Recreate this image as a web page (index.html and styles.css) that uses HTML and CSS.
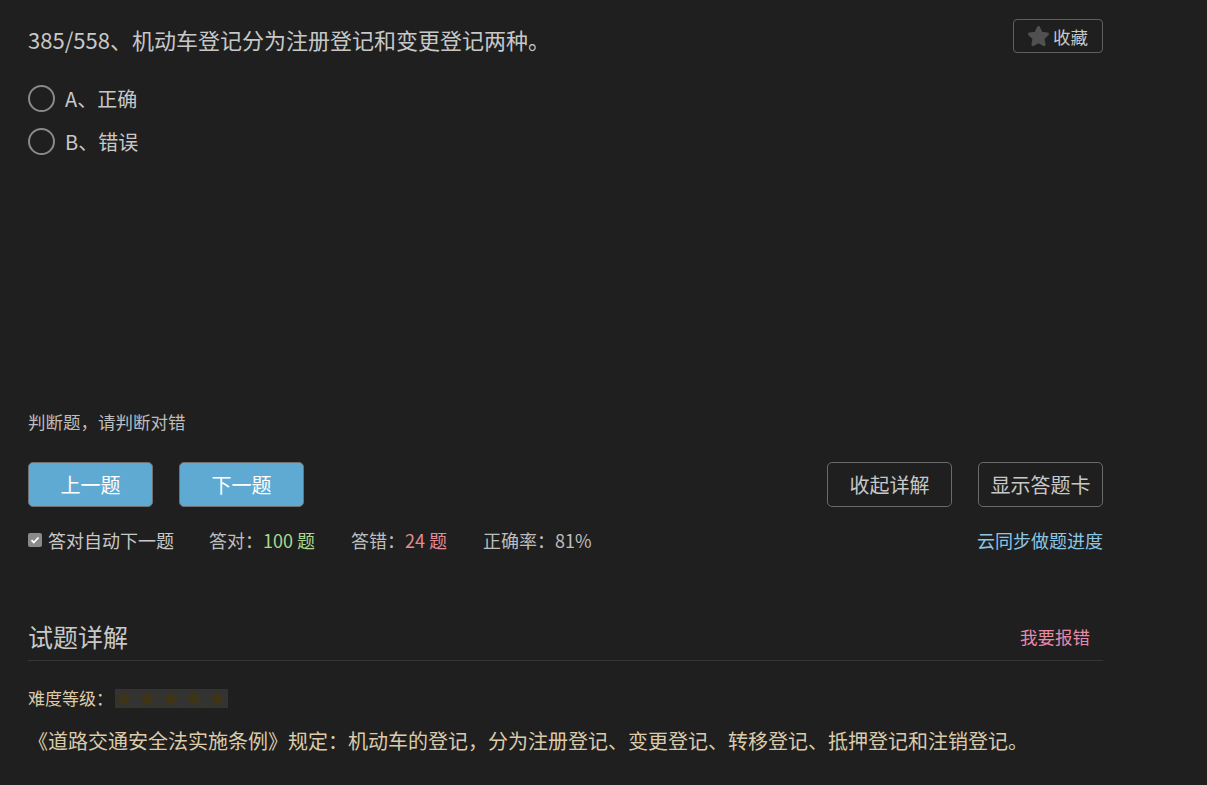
FILE: index.html
```html
<!DOCTYPE html>
<html lang="zh">
<head>
<meta charset="utf-8">
<link rel="stylesheet" href="styles.css">
</head>
<body>
<div class="page">
  <div class="q-head">
    <div class="q-title">385/558、机动车登记分为注册登记和变更登记两种。</div>
    <button class="fav"><svg width="23" height="23" viewBox="0 0 24 24"><path d="M12 2.5l2.9 6 6.6.9-4.8 4.6 1.2 6.6L12 17.4l-5.9 3.2 1.2-6.6-4.8-4.6 6.6-.9z" fill="#505050" stroke="#505050" stroke-width="3" stroke-linejoin="round"/></svg><span>收藏</span></button>
  </div>
  <div class="options">
    <label class="opt"><span class="radio"></span><span>A、正确</span></label>
    <label class="opt"><span class="radio"></span><span>B、错误</span></label>
  </div>
  <div class="hint">判断题，请判断对错</div>
  <div class="btn-row">
    <div class="btn-group">
      <button class="btn primary">上一题</button>
      <button class="btn primary">下一题</button>
    </div>
    <div class="btn-group">
      <button class="btn">收起详解</button>
      <button class="btn">显示答题卡</button>
    </div>
  </div>
  <div class="stats">
    <div class="stats-left">
      <label class="auto"><span class="check"><svg width="10" height="10" viewBox="0 0 10 10"><path d="M1.5 5.2l2.3 2.3 4.7-5" fill="none" stroke="#fff" stroke-width="1.8"/></svg></span>答对自动下一题</label>
      <span class="stat">答对：<em class="ok">100 题</em></span>
      <span class="stat">答错：<em class="bad">24 题</em></span>
      <span class="stat">正确率：81%</span>
    </div>
    <a class="sync">云同步做题进度</a>
  </div>
  <div class="detail-head">
    <div class="detail-title">试题详解</div>
    <a class="report">我要报错</a>
  </div>
  <div class="level">难度等级：<svg class="stars" width="113" height="19" viewBox="0 0 113 19">
      <defs><path id="st" d="M0,-8.5 L2.1,-2.8 L8.1,-2.6 L3.3,1.1 L5,6.9 L0,3.5 L-5,6.9 L-3.3,1.1 L-8.1,-2.6 L-2.1,-2.8Z" fill="#3e3516" stroke="#3e3516" stroke-width="0.8" stroke-linejoin="round"/></defs>
      <rect width="113" height="19" fill="#333"/>
      <use href="#st" transform="translate(9,10)"/>
      <use href="#st" transform="translate(32.3,10)"/>
      <use href="#st" transform="translate(55.7,10)"/>
      <use href="#st" transform="translate(79,10)"/>
      <use href="#st" transform="translate(102.3,10)"/>
    </svg></div>
  <div class="explain">《道路交通安全法实施条例》规定：机动车的登记，分为注册登记、变更登记、转移登记、抵押登记和注销登记。</div>
</div>
</body>
</html>
```
FILE: styles.css
```css
html, body { margin: 0; padding: 0; background: #1f1f1f; }
body { font-family: "Noto Sans CJK SC", "Liberation Sans", sans-serif; color: #c8c8c8; }
.page { width: 1075px; margin-left: 28px; padding-top: 19px; }
.q-head { display: flex; justify-content: space-between; align-items: flex-start; height: 66px; }
.q-title { font-size: 22px; line-height: 28px; color: #c8c8c8; margin-top: 6px; }
.fav { display: flex; align-items: center; gap: 3px; height: 34px; width: 90px; padding: 0 0 0 13px; background: transparent; border: 1px solid #606060; border-radius: 4px; color: #c8c8c8; font-family: inherit; font-size: 17.5px; }
.options { display: flex; flex-direction: column; gap: 16px; }
.opt { display: flex; align-items: center; gap: 10px; font-size: 20px; line-height: 26px; color: #c8c8c8; }
.radio { width: 23px; height: 23px; border: 2px solid #8a8a8a; border-radius: 50%; }
.hint { margin-top: 256px; font-size: 17.5px; line-height: 22px; color: #bdbdbd; }
.btn-row { display: flex; justify-content: space-between; margin-top: 29px; }
.btn-group { display: flex; gap: 26px; }
.btn { width: 125px; height: 45px; border: 1px solid #6a6a6a; border-radius: 5px; background: transparent; color: #c8c8c8; font-family: inherit; font-size: 20px; padding: 0; }
.btn.primary { background: #5faad3; color: #fff; border-color: #707070; }
.stats { display: flex; justify-content: space-between; align-items: center; margin-top: 21px; font-size: 18px; line-height: 24px; }
.stats-left { display: flex; align-items: center; }
.auto { display: flex; align-items: center; gap: 6px; margin-right: 35px; color: #c8c8c8; }
.check { width: 14px; height: 14px; background: #8a8a8a; border-radius: 2px; display: flex; align-items: center; justify-content: center; }
.stat { margin-right: 36px; color: #bdbdbd; }
.stat em { font-style: normal; }
.ok { color: #a9d88d; }
.bad { color: #e48a92; }
.sync { color: #8cc6e6; font-size: 18px; }
.detail-head { display: flex; justify-content: space-between; align-items: center; margin-top: 68px; padding-bottom: 8px; border-bottom: 1px solid #363636; }
.detail-title { font-size: 25px; line-height: 32px; color: #c8c8c8; }
.report { font-size: 17.5px; color: #e68aaa; margin-right: 13px; }
.level { margin-top: 26px; font-size: 17px; line-height: 22px; color: #dccbaa; display: flex; align-items: center; }
.stars { display: block; margin-left: 2px; }
.explain { margin-top: 19px; font-size: 20px; line-height: 26px; color: #dccbaa; }
```
